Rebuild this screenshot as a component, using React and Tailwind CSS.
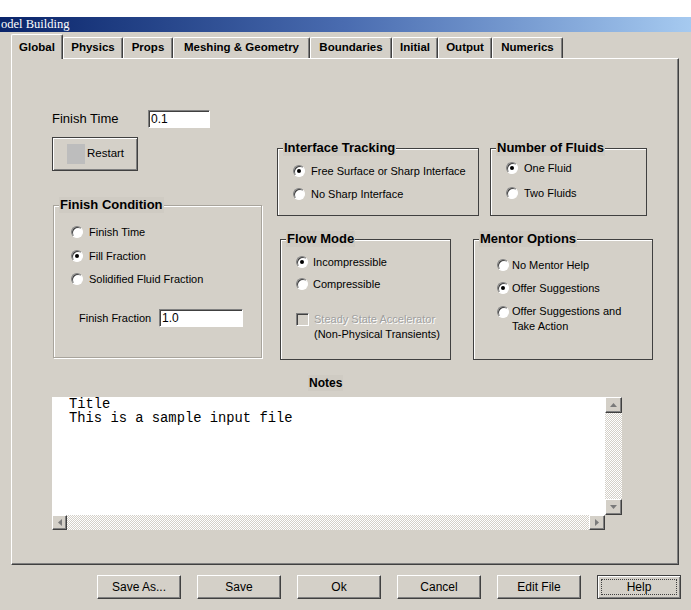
import React from "react";

const raised =
  "border border-t-white border-l-white border-b-[#404040] border-r-[#404040] shadow-[inset_-1px_-1px_0_#808080]";
const sunken =
  "border border-t-[#808080] border-l-[#808080] border-b-white border-r-white shadow-[inset_1px_1px_0_#404040]";

function Radio({ checked }) {
  return (
    <span className="flex items-center justify-center w-[12px] h-[12px] shrink-0 rounded-full bg-white border border-t-[#808080] border-l-[#808080] border-b-white border-r-white shadow-[inset_1px_1px_0_#404040]">
      {checked && <span className="w-[4px] h-[4px] rounded-full bg-black" />}
    </span>
  );
}

function RadioRow({ checked, label, gap = "ml-[6px]", className = "" }) {
  return (
    <div className={"flex items-center h-[16px] text-[11px] leading-[16px] " + className}>
      <Radio checked={checked} />
      <span className={gap}>{label}</span>
    </div>
  );
}

function GroupBox({ title, className = "", dark = true, children }) {
  return (
    <div
      className={
        (dark
          ? "border border-[#404040] shadow-[inset_1px_1px_0_#ffffff] "
          : "border border-[#a8a49c] shadow-[inset_1px_1px_0_#ffffff,1px_1px_0_#ffffff] ") + className
      }
    >
      <div className="-mt-[9px] ml-[5px] w-fit px-px bg-[#cfcbc3] text-[13px] font-bold leading-[16px] text-black">
        {title}
      </div>
      {children}
    </div>
  );
}

function Tab({ label, w, selected }) {
  return (
    <div
      className={
        "flex items-center justify-center text-[11.5px] font-bold text-black border-t border-l border-t-white border-l-white border-r border-r-[#404040] shadow-[inset_-1px_0_0_#808080] rounded-t-[2px] bg-[#d4d0c8] " +
        w +
        (selected ? " h-[25px] -mb-px relative z-10 pt-[1px]" : " h-[21px]")
      }
    >
      {label}
    </div>
  );
}

function Btn({ label, def }) {
  return (
    <div
      className={
        "w-[84px] h-[24px] flex items-center justify-center text-[12px] text-black " +
        (def
          ? "border border-[#404040] shadow-[inset_1px_1px_0_#ffffff,inset_-1px_-1px_0_#808080]"
          : raised)
      }
    >
      {def ? (
        <span className="w-[76px] h-[16px] flex items-center justify-center border border-dotted border-[#404040]">
          {label}
        </span>
      ) : (
        label
      )}
    </div>
  );
}

function Arrow({ dir }) {
  const pts = {
    up: "0,4 3.5,0 7,4",
    down: "0,0 3.5,4 7,0",
    left: "4,0 0,3.5 4,7",
    right: "0,0 4,3.5 0,7",
  }[dir];
  const vert = dir === "up" || dir === "down";
  return (
    <svg width={vert ? 7 : 4} height={vert ? 4 : 7} viewBox={vert ? "0 0 7 4" : "0 0 4 7"}>
      <polygon points={pts} fill="#7a7a7a" />
    </svg>
  );
}

const dither =
  "bg-[repeating-conic-gradient(#d4d0c8_0_25%,#ffffff_0_50%)] bg-[length:2px_2px]";

export default function App() {
  return (
    <div className="w-[691px] h-[610px] overflow-hidden bg-[#d4d0c8] flex flex-col font-['Liberation_Sans',Arial,sans-serif] text-black">
      <div className="h-[17px] bg-white shrink-0" />
      <div className="h-[15px] shrink-0 bg-linear-to-r from-[#0a246a] via-[#4a6cb0] to-[#a6caf0] overflow-hidden">
        <div className="ml-px text-white text-[12.5px] leading-[15px] font-['Liberation_Serif',serif] whitespace-nowrap">
          odel Building
        </div>
      </div>

      {/* tabs */}
      <div className="h-[26px] shrink-0 flex items-end pl-[11px]">
        <Tab label="Global" w="w-[52px]" selected />
        <Tab label="Physics" w="w-[60px]" />
        <Tab label="Props" w="w-[50px]" />
        <Tab label="Meshing & Geometry" w="w-[137px]" />
        <Tab label="Boundaries" w="w-[82px]" />
        <Tab label="Initial" w="w-[46px]" />
        <Tab label="Output" w="w-[54px]" />
        <Tab label="Numerics" w="w-[71px]" />
      </div>

      {/* panel */}
      <div className="ml-[11px] w-[668px] h-[507px] shrink-0 border border-t-white border-l-white border-r-[#404040] border-b-[#404040] shadow-[inset_-1px_-1px_0_#808080] flex flex-col">
        <div className="flex items-start">
          {/* left column */}
          <div className="ml-[40px] w-[210px] mt-[51px] flex flex-col">
            <div className="flex items-center h-[18px]">
              <span className="w-[96px] text-[13px] leading-[18px]">Finish Time</span>
              <div className={"w-[62px] h-[18px] bg-white text-[12px] leading-[16px] pl-[2px] " + sunken}>0.1</div>
            </div>
            <div className="mt-[9px] w-[86px] h-[34px] border border-[#404040] shadow-[inset_1px_1px_0_#ffffff,inset_-1px_-1px_0_#808080] flex items-center">
              <div className="ml-[14px] w-[18px] h-[20px] bg-[#bdbdbd]" />
              <span className="ml-[2px] text-[11.5px]">Restart</span>
            </div>
            <GroupBox title="Finish Condition" dark={false} className="mt-[34px] ml-px w-[209px] h-[153px]">
              <div className="pl-[17px] flex flex-col">
                <RadioRow label="Finish Time" className="mt-[11px]" />
                <RadioRow label="Fill Fraction" checked className="mt-[8px]" />
                <RadioRow label="Solidified Fluid Fraction" className="mt-[7px]" />
              </div>
              <div className="mt-[22px] ml-[25px] flex items-center h-[18px]">
                <span className="w-[80px] text-[11px]">Finish Fraction</span>
                <div className={"w-[84px] h-[18px] bg-white text-[12px] leading-[16px] pl-[2px] " + sunken}>1.0</div>
              </div>
            </GroupBox>
          </div>

          {/* right area */}
          <div className="ml-[15px] mt-[89px] flex flex-col">
            <div className="flex">
              <GroupBox title="Interface Tracking" className="w-[202px] h-[68px]">
                <div className="pl-[15px]">
                  <RadioRow label="Free Surface or Sharp Interface" checked className="mt-[7px]" />
                  <RadioRow label="No Sharp Interface" className="mt-[7px]" />
                </div>
              </GroupBox>
              <GroupBox title="Number of Fluids" className="ml-[11px] w-[157px] h-[68px]">
                <div className="pl-[15px]">
                  <RadioRow label="One Fluid" checked className="mt-[4px]" />
                  <RadioRow label="Two Fluids" className="mt-[9px]" />
                </div>
              </GroupBox>
            </div>
            <div className="flex mt-[23px]">
              <GroupBox title="Flow Mode" className="ml-[3px] w-[171px] h-[121px]">
                <div className="pl-[15px]">
                  <RadioRow label="Incompressible" checked gap="ml-[5px]" className="mt-[7px]" />
                  <RadioRow label="Compressible" gap="ml-[5px]" className="mt-[6px]" />
                  <div className="mt-[20px] flex items-start">
                    <span className={"w-[13px] h-[13px] mt-[1px] shrink-0 bg-[#d4d0c8] " + sunken} />
                    <div className="ml-[5px] text-[11px] leading-[15px]">
                      <div className="text-[#a0a0a0] [text-shadow:1px_1px_0_#ffffff]">Steady State Accelerator</div>
                      <div>(Non-Physical Transients)</div>
                    </div>
                  </div>
                </div>
              </GroupBox>
              <GroupBox title="Mentor Options" className="ml-[22px] w-[180px] h-[121px]">
                <div className="pl-[23px]">
                  <RadioRow label="No Mentor Help" gap="ml-[3px]" className="mt-[10px]" />
                  <RadioRow label="Offer Suggestions" checked gap="ml-[3px]" className="mt-[7px]" />
                  <div className="mt-[8px] flex items-start">
                    <span className="mt-[2px]">
                      <Radio />
                    </span>
                    <div className="ml-[3px] text-[11px] leading-[15px]">
                      <div>Offer Suggestions and</div>
                      <div>Take Action</div>
                    </div>
                  </div>
                </div>
              </GroupBox>
            </div>
          </div>
        </div>

        {/* notes */}
        <div className="mt-[15px] ml-[296px] w-fit px-px bg-[#cfcbc3] text-[12px] font-bold leading-[16px]">Notes</div>
        <div className="mt-[6px] ml-[40px] w-[570px] h-[133px] flex flex-col">
          <div className="flex h-[118px]">
            <div className="w-[553px] h-[118px] bg-white pl-[17px] pt-px font-['Liberation_Mono',monospace] text-[13.8px] leading-[14px] whitespace-pre">
              <div>Title</div>
              <div>This is a sample input file</div>
            </div>
            <div className="w-[17px] h-[118px] flex flex-col">
              <div className={"h-[16px] flex items-center justify-center bg-[#d4d0c8] " + raised}>
                <Arrow dir="up" />
              </div>
              <div className={"flex-1 " + dither} />
              <div className={"h-[16px] flex items-center justify-center bg-[#d4d0c8] " + raised}>
                <Arrow dir="down" />
              </div>
            </div>
          </div>
          <div className="flex h-[15px]">
            <div className="w-[553px] flex">
              <div className={"w-[15px] flex items-center justify-center bg-[#d4d0c8] " + raised}>
                <Arrow dir="left" />
              </div>
              <div className={"flex-1 " + dither} />
              <div className={"w-[16px] flex items-center justify-center bg-[#d4d0c8] " + raised}>
                <Arrow dir="right" />
              </div>
            </div>
            <div className="w-[17px] bg-[#d4d0c8]" />
          </div>
        </div>
      </div>

      {/* buttons */}
      <div className="mt-[10px] ml-[97px] flex gap-[16px]">
        <Btn label="Save As..." />
        <Btn label="Save" />
        <Btn label="Ok" />
        <Btn label="Cancel" />
        <Btn label="Edit File" />
        <Btn label="Help" def />
      </div>
    </div>
  );
}
